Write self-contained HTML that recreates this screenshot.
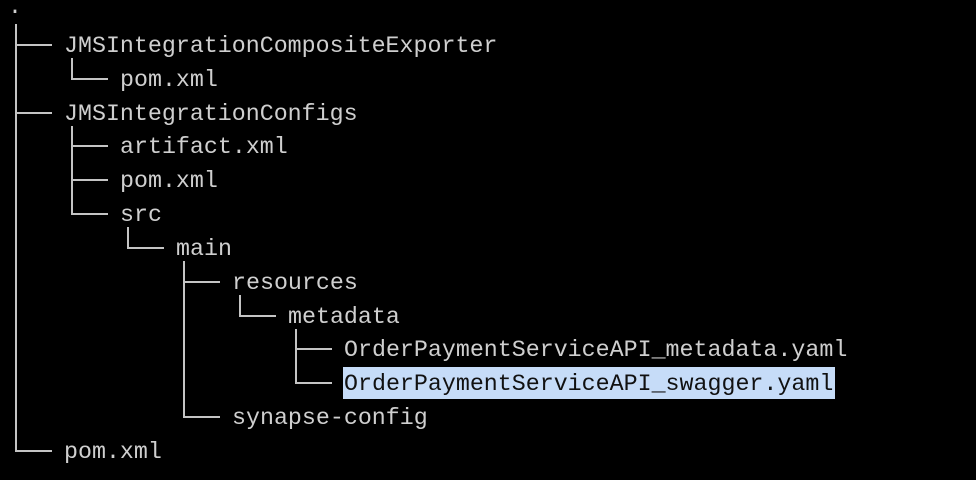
<!DOCTYPE html>
<html><head><meta charset="utf-8"><style>
html,body{margin:0;padding:0;background:#000;width:976px;height:480px;overflow:hidden;position:relative}
.t{position:absolute;font-family:"Liberation Mono","DejaVu Sans Mono",monospace;font-size:23.3px;color:#cfcfcf;white-space:pre;line-height:30px}
.l{position:absolute;background:#c4c4c4}
.hl{position:absolute;background:#c6dcf8;left:343px;top:367px;width:492px;height:32px}
</style></head><body>
<div class="hl"></div>
<div id="root"></div>
<script>
(function(){
var items=[["JMSIntegrationCompositeExporter",1],["pom.xml",2],["JMSIntegrationConfigs",1],["artifact.xml",2],["pom.xml",2],["src",2],["main",3],["resources",4],["metadata",5],["OrderPaymentServiceAPI_metadata.yaml",6],["OrderPaymentServiceAPI_swagger.yaml",6],["synapse-config",4],["pom.xml",1]];
var R=document.getElementById('root'),h='';
function cy(i){return 45+33.83*i;}
h+='<div class="t" style="left:8px;top:'+(11-19)+'px">.</div>';
var rows=[{d:0,c:11}];
items.forEach(function(it,i){rows.push({d:it[1],c:cy(i)});});
for(var i=1;i<rows.length;i++){
  var d=rows[i].d,c=rows[i].c,vx=15+56*(d-1);
  var prev=i-1;while(rows[prev].d>d)prev--;
  var t0=(rows[prev].d==d)?rows[prev].c:rows[prev].c+13;
  h+='<div class="l" style="left:'+vx+'px;top:'+t0+'px;width:2px;height:'+(c-t0+1)+'px"></div>';
  h+='<div class="l" style="left:'+vx+'px;top:'+(c-1)+'px;width:37px;height:2px"></div>';
  var col=(i==11)?'#111':'#cfcfcf';
  h+='<div class="t" style="left:'+(64+56*(d-1))+'px;top:'+(c-14)+'px;color:'+col+'">'+items[i-1][0]+'</div>';
}
R.innerHTML=h;
})();
</script>
</body></html>
